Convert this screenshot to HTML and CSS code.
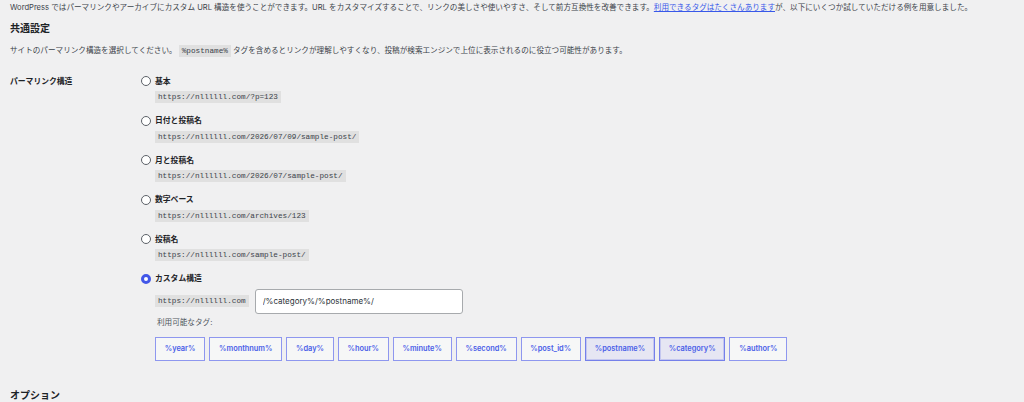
FILE: index.html
```html
<!DOCTYPE html>
<html lang="ja">
<head>
<meta charset="utf-8">
<title>パーマリンク設定</title>
<link rel="stylesheet" href="styles.css">
</head>
<body>
<div class="wrap">
  <p class="intro">WordPress ではパーマリンクやアーカイブにカスタム URL 構造を使うことができます。URL をカスタマイズすることで、リンクの美しさや使いやすさ、そして前方互換性を改善できます。<a href="#" class="link">利用できるタグはたくさんあります</a>が、以下にいくつか試していただける例を用意しました。</p>

  <h2 class="title">共通設定</h2>
  <p class="desc">サイトのパーマリンク構造を選択してください。 <code class="code">%postname%</code> タグを含めるとリンクが理解しやすくなり、投稿が検索エンジンで上位に表示されるのに役立つ可能性があります。</p>

  <div class="form-row">
    <div class="row-label">パーマリンク構造</div>
    <div class="row-field">
      <fieldset class="structures">
        <div class="option">
          <input class="radio" type="radio" name="selection" id="p-plain">
          <div class="option-body">
            <label class="option-label" for="p-plain">基本</label>
            <code class="code">https://nllllll.com/?p=123</code>
          </div>
        </div>
        <div class="option">
          <input class="radio" type="radio" name="selection" id="p-day">
          <div class="option-body">
            <label class="option-label" for="p-day">日付と投稿名</label>
            <code class="code">https://nllllll.com/2026/07/09/sample-post/</code>
          </div>
        </div>
        <div class="option">
          <input class="radio" type="radio" name="selection" id="p-month">
          <div class="option-body">
            <label class="option-label" for="p-month">月と投稿名</label>
            <code class="code">https://nllllll.com/2026/07/sample-post/</code>
          </div>
        </div>
        <div class="option">
          <input class="radio" type="radio" name="selection" id="p-numeric">
          <div class="option-body">
            <label class="option-label" for="p-numeric">数字ベース</label>
            <code class="code">https://nllllll.com/archives/123</code>
          </div>
        </div>
        <div class="option">
          <input class="radio" type="radio" name="selection" id="p-post">
          <div class="option-body">
            <label class="option-label" for="p-post">投稿名</label>
            <code class="code">https://nllllll.com/sample-post/</code>
          </div>
        </div>
        <div class="option option-custom">
          <input class="radio" type="radio" name="selection" id="p-custom" checked>
          <div class="option-body">
            <label class="option-label" for="p-custom">カスタム構造</label>
            <div class="custom-line">
              <code class="code">https://nllllll.com</code>
              <input class="text-input" type="text" value="/%category%/%postname%/">
            </div>
            <div class="tags">
              <div class="tags-legend">利用可能なタグ:</div>
              <ul class="tag-list">
                <li><button type="button" class="tag">%year%</button></li>
                <li><button type="button" class="tag">%monthnum%</button></li>
                <li><button type="button" class="tag">%day%</button></li>
                <li><button type="button" class="tag">%hour%</button></li>
                <li><button type="button" class="tag">%minute%</button></li>
                <li><button type="button" class="tag">%second%</button></li>
                <li><button type="button" class="tag">%post_id%</button></li>
                <li><button type="button" class="tag is-active">%postname%</button></li>
                <li><button type="button" class="tag is-active">%category%</button></li>
                <li><button type="button" class="tag">%author%</button></li>
              </ul>
            </div>
          </div>
        </div>
      </fieldset>
    </div>
  </div>

  <h2 class="title title-options">オプション</h2>
</div>
</body>
</html>
```

FILE: styles.css
```css
* {
  box-sizing: border-box;
}

html,
body {
  margin: 0;
  background: #f0f0f1;
}

body {
  font-family: Inter, "Noto Sans CJK JP", sans-serif;
  font-size: 7.6px;
  line-height: 11px;
  color: #3c434a;
  overflow: hidden;
}

.wrap {
  padding: 0 10px;
}

.intro {
  margin: 1.5px 0 0;
}

.link {
  color: #3858e9;
  text-decoration: underline;
}

.title {
  margin: 8.5px 0 0;
  font-size: 10px;
  line-height: 14px;
  font-weight: 700;
  color: #1d2327;
}

.desc {
  margin: 10px 0 0;
  line-height: 12px;
}

.code {
  display: inline-block;
  font-family: "Liberation Mono", "DejaVu Sans Mono", monospace;
  font-size: 7.7px;
  line-height: 12px;
  height: 12px;
  padding: 0 3px;
  background: rgba(0, 0, 0, 0.065);
  color: #3c434a;
}

/* settings row: label column + field column */
.form-row {
  display: flex;
  margin-top: 18.5px;
}

.row-label {
  width: 131px;
  flex: none;
  font-size: 7.8px;
  font-weight: 600;
  color: #1d2327;
}

.row-field {
  flex: 1;
}

.structures {
  margin: 0;
  padding: 0;
  border: 0;
}

.option {
  display: flex;
  align-items: flex-start;
  margin-bottom: 12px;
}

.radio {
  appearance: none;
  -webkit-appearance: none;
  flex: none;
  width: 10px;
  height: 10px;
  margin: 0.5px 4px 0 0;
  border: 1.2px solid #5c6168;
  border-radius: 50%;
  background: #fff;
}

.radio:checked {
  border: 3px solid #4257e8;
  background: #fff;
}

.option-body {
  display: flex;
  flex-direction: column;
  align-items: flex-start;
}

.option-label {
  font-size: 7.8px;
  font-weight: 600;
  color: #1d2327;
}

.option-body > .code {
  margin-top: 4.5px;
}

.custom-line {
  display: flex;
  align-items: center;
  gap: 6px;
  margin-top: 4.5px;
}

.text-input {
  width: 208px;
  height: 25px;
  padding: 0 7px;
  border: 1px solid #a7aaad;
  border-radius: 3px;
  background: #fff;
  font-family: Inter, "Noto Sans CJK JP", sans-serif;
  font-size: 8px;
  color: #2c3338;
  outline: none;
}

.tags {
  margin-top: 3.5px;
}

.tags-legend {
  padding-left: 2px;
  color: #50575e;
}

.tag-list {
  display: flex;
  gap: 4px;
  margin: 8.5px 0 0;
  padding: 0;
  list-style: none;
}

.tag {
  height: 24px;
  padding: 0 8.8px;
  border: 1px solid #8e97ef;
  border-radius: 0;
  background: #f6f7f7;
  font-family: Inter, "Noto Sans CJK JP", sans-serif;
  font-size: 7.4px;
  font-weight: 600;
  color: #4a60e8;
}

.tag.is-active {
  background: #e6e6f3;
  border-color: #7580ea;
  box-shadow: inset 0 0 0 1px #c4c7f0;
}

.title-options {
  margin-top: 15px;
}
```
